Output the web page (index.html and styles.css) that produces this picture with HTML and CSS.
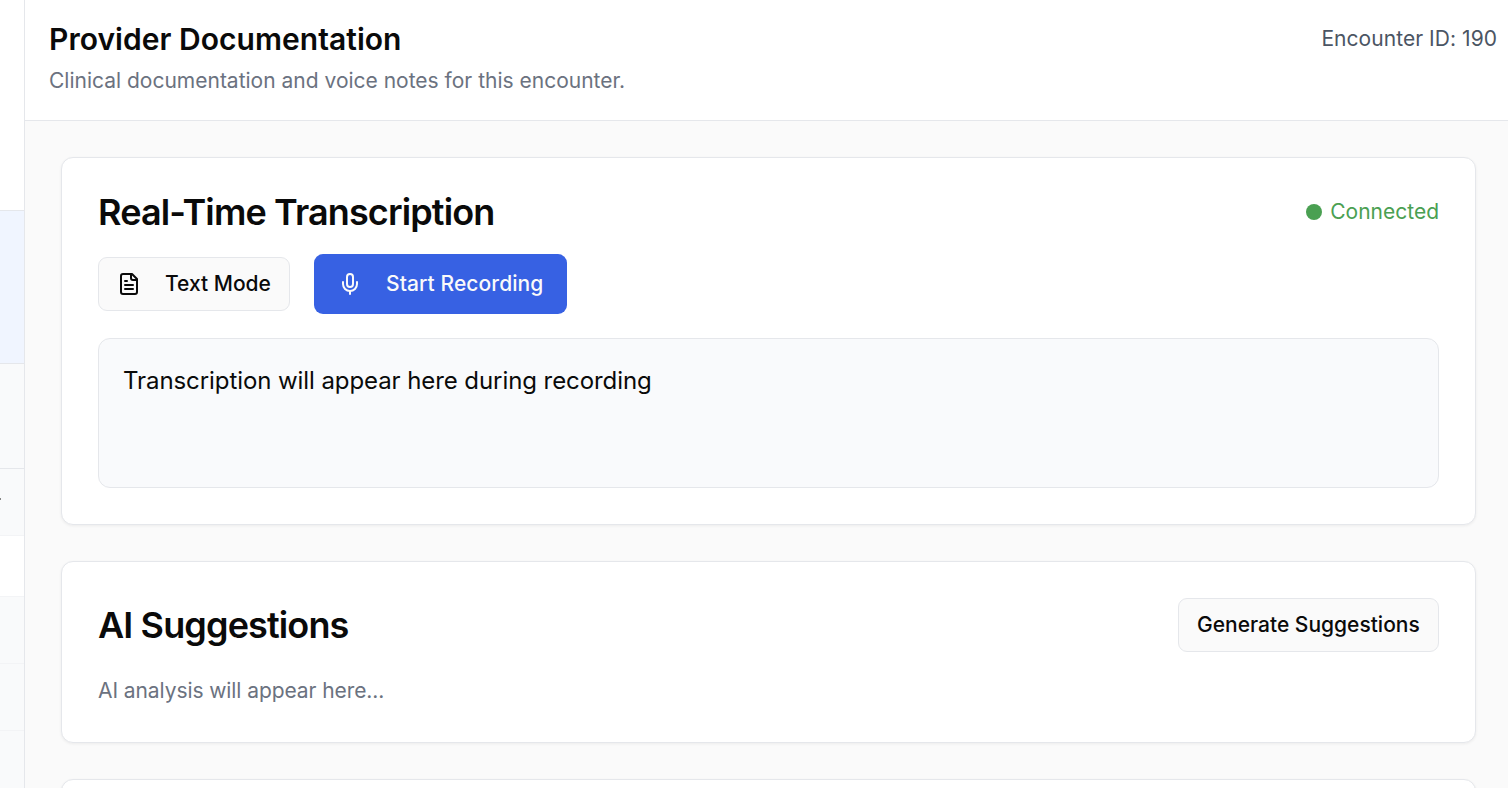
FILE: index.html
```
<!DOCTYPE html>
<html lang="en">
<head>
<meta charset="utf-8">
<title>Provider Documentation</title>
<link rel="stylesheet" href="styles.css">
</head>
<body>
<div class="app">
  <aside class="sidebar">
    <div class="side-top"></div>
    <div class="side-selected"></div>
    <div class="side-block"></div>
    <div class="side-heading"><span class="side-mark"></span></div>
    <div class="side-row side-row-white"></div>
    <div class="side-row"></div>
    <div class="side-row"></div>
    <div class="side-rest"></div>
  </aside>
  <main class="main">
    <header class="header">
      <div>
        <h1 class="title">Provider Documentation</h1>
        <p class="subtitle">Clinical documentation and voice notes for this encounter.</p>
      </div>
      <div class="encounter">Encounter ID: 190</div>
    </header>
    <div class="content">
      <section class="card">
        <div class="card-head">
          <h2 class="card-title">Real-Time Transcription</h2>
          <div class="status"><span class="dot"></span><span>Connected</span></div>
        </div>
        <div class="actions">
          <button class="btn btn-outline btn-text">
            <svg class="icon" viewBox="0 0 24 24"><path d="M15 2H6a2 2 0 0 0-2 2v16a2 2 0 0 0 2 2h12a2 2 0 0 0 2-2V7Z"/><path d="M14 2v4a2 2 0 0 0 2 2h4"/><path d="M10 9H8"/><path d="M16 13H8"/><path d="M16 17H8"/></svg>
            <span>Text Mode</span>
          </button>
          <button class="btn btn-primary">
            <svg class="icon" viewBox="0 0 24 24"><path d="M12 2a3 3 0 0 0-3 3v7a3 3 0 0 0 6 0V5a3 3 0 0 0-3-3Z"/><path d="M19 10v2a7 7 0 0 1-14 0v-2"/><path d="M12 19v3"/></svg>
            <span>Start Recording</span>
          </button>
        </div>
        <div class="transcript">Transcription will appear here during recording</div>
      </section>
      <section class="card">
        <div class="card-head">
          <h2 class="card-title">AI Suggestions</h2>
          <button class="btn btn-outline btn-generate">Generate Suggestions</button>
        </div>
        <p class="hint">AI analysis will appear here...</p>
      </section>
      <section class="card card-next"></section>
    </div>
  </main>
</div>
</body>
</html>
```
FILE: styles.css
```
* { box-sizing: border-box; margin: 0; padding: 0; }
body {
  font-family: Inter, "Liberation Sans", sans-serif;
  font-size: 21px;
  line-height: 30px;
  color: #0a0a0a;
  background: #fafafa;
  overflow: hidden;
}
.app { display: flex; height: 788px; overflow: hidden; }
.sidebar {
  width: 25px;
  flex: none;
  display: flex;
  flex-direction: column;
  border-right: 1px solid #e5e7eb;
  background: #f9fafb;
}
.side-top { height: 211px; background: #fff; border-bottom: 1px solid #e5e7eb; }
.side-selected { height: 153px; background: #f0f5ff; border-bottom: 1px solid #e5e7eb; }
.side-block { height: 105px; border-bottom: 1px solid #e5e7eb; }
.side-heading { height: 67px; padding-top: 29px; border-bottom: 1px solid #f3f4f6; }
.side-mark { display: block; width: 1px; height: 2px; background: #858585; }
.side-row { height: 67px; border-bottom: 1px solid #f3f4f6; }
.side-row-white { height: 61px; background: #fff; }
.side-rest { flex: 1; }
.main { flex: 1; min-width: 0; }
.header {
  height: 121px;
  display: flex;
  justify-content: space-between;
  padding: 18px 11px 0 24px;
  background: #fff;
  border-bottom: 1px solid #e5e7eb;
}
.title { font-size: 30px; line-height: 42px; font-weight: 600; letter-spacing: 0.04px; }
.subtitle { margin-top: 6px; color: #6b7280; }
.encounter { padding-top: 6px; color: #4b5563; letter-spacing: 0.05px; }
.content { display: flex; flex-direction: column; gap: 36px; padding: 36px 32px 0 36px; }
.card {
  background: #fff;
  border: 1px solid #e5e7eb;
  border-radius: 12px;
  padding: 36px;
  box-shadow: 0 1px 3px rgba(0, 0, 0, 0.06);
}
.card-next { height: 120px; }
.card-head { display: flex; align-items: center; justify-content: space-between; }
.card-title { font-size: 36px; line-height: 36px; font-weight: 600; letter-spacing: -0.87px; }
.status { display: flex; align-items: center; gap: 8px; color: #4aa052; }
.dot { width: 16px; height: 16px; border-radius: 50%; background: #4aa052; }
.actions { display: flex; align-items: center; gap: 24px; margin-top: 24px; }
.btn {
  display: flex;
  align-items: center;
  height: 54px;
  padding: 0 18px;
  border: 1px solid transparent;
  border-radius: 9px;
  font: inherit;
  font-weight: 500;
  color: #0a0a0a;
  white-space: nowrap;
}
.btn-outline { background: #fafafa; border-color: #e5e7eb; }
.btn-text { width: 192px; }
.btn-generate { width: 261px; }
.btn-primary { width: 253px; height: 60px; padding: 0 23px; background: #3761e3; color: #fafafa; letter-spacing: 0.09px; }
.icon {
  width: 24px;
  height: 24px;
  margin-right: 24px;
  flex: none;
  fill: none;
  stroke: currentColor;
  stroke-width: 2;
  stroke-linecap: round;
  stroke-linejoin: round;
}
.transcript {
  height: 150px;
  margin-top: 24px;
  padding: 24px;
  border: 1px solid #e5e7eb;
  border-radius: 12px;
  background: #f9fafc;
  font-size: 24px;
  line-height: 36px;
  letter-spacing: -0.08px;
}
.hint { margin-top: 24px; color: #6b7280; letter-spacing: -0.08px; }
```
